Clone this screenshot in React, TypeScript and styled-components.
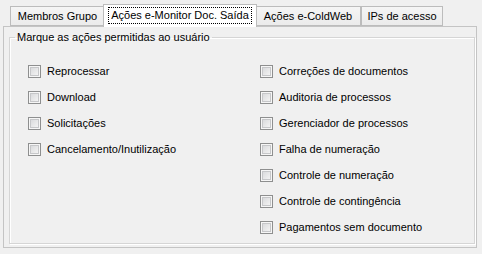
import React from "react";
import styled, { createGlobalStyle } from "styled-components";

const Global = createGlobalStyle`
  html, body { margin: 0; padding: 0; background: #f0f0f0; }
  body { font-family: "Liberation Sans", Arial, sans-serif; font-size: 11px; color: #000; }
`;

const Window = styled.div`
  width: 482px;
  height: 254px;
  padding: 3px 0 0 3px;
  box-sizing: border-box;
  display: flex;
  flex-direction: column;
`;

const TabStrip = styled.div`
  display: flex;
  align-items: flex-end;
  height: 23px;
  padding-left: 7px;
  position: relative;
  z-index: 1;
`;

const Tab = styled.div<{ $w: number; $active?: boolean }>`
  box-sizing: border-box;
  width: ${(p) => p.$w}px;
  height: ${(p) => (p.$active ? 23 : 20)}px;
  margin: ${(p) => (p.$active ? "0 -2px -1px -2px" : "0")};
  position: relative;
  z-index: ${(p) => (p.$active ? 2 : 1)};
  border: 1px solid #bcbcbc;
  border-bottom: ${(p) => (p.$active ? "none" : "1px solid #bcbcbc")};
  background: ${(p) => (p.$active ? "#ffffff" : "linear-gradient(#f5f5f5, #ebebeb)")};
  display: flex;
  align-items: center;
  justify-content: center;
  padding-bottom: ${(p) => (p.$active ? "1px" : "0")};
  white-space: nowrap;
`;

const FocusLabel = styled.span`
  outline: 1px dotted #000;
  outline-offset: 0;
  padding: 1px 2px 1px 2px;
  line-height: 13px;
`;

const Panel = styled.div`
  box-sizing: border-box;
  width: 474px;
  height: 222px;
  border: 1px solid #c4c4c4;
  background: #f0f0f0;
  padding: 4px 1px 2px 5px;
  display: flex;
`;

const Group = styled.fieldset`
  box-sizing: border-box;
  margin: 0;
  flex: 1;
  height: 213px;
  border: 1px solid #d5d5d5;
  box-shadow: 1px 1px 0 #ffffff, inset 1px 1px 0 #ffffff;
  padding: 0;
  min-width: 0;
`;

const Legend = styled.legend`
  margin-left: 5px;
  padding: 0 2px 0 2px;
  line-height: 13px;
`;

const Columns = styled.div`
  display: grid;
  grid-template-columns: 232px 1fr;
  padding: 14px 0 0 18px;
`;

const Column = styled.div`
  display: flex;
  flex-direction: column;
`;

const Row = styled.label`
  display: flex;
  align-items: center;
  height: 26px;
  gap: 6px;
  white-space: nowrap;
`;

const Box = styled.span`
  box-sizing: border-box;
  width: 13px;
  height: 13px;
  border: 1px solid #8e8f8f;
  background: #f6f6f6;
  padding: 1px;
  display: flex;
`;

const BoxInner = styled.span`
  flex: 1;
  border: 1px solid #c6c7c9;
  background: linear-gradient(135deg, #dadbdd, #f3f3f3);
`;

function Check({ label }: { label: string }) {
  return (
    <Row>
      <Box>
        <BoxInner />
      </Box>
      <span>{label}</span>
    </Row>
  );
}

const left = ["Reprocessar", "Download", "Solicitações", "Cancelamento/Inutilização"];
const right = [
  "Correções de documentos",
  "Auditoria de processos",
  "Gerenciador de processos",
  "Falha de numeração",
  "Controle de numeração",
  "Controle de contingência",
  "Pagamentos sem documento",
];

export default function App() {
  return (
    <>
      <Global />
      <Window>
        <TabStrip>
          <Tab $w={95}>Membros Grupo</Tab>
          <Tab $w={154} $active>
            <FocusLabel>Ações e-Monitor Doc. Saída</FocusLabel>
          </Tab>
          <Tab $w={106}>Ações e-ColdWeb</Tab>
          <Tab $w={82}>IPs de acesso</Tab>
        </TabStrip>
        <Panel>
          <Group>
            <Legend>Marque as ações permitidas ao usuário</Legend>
            <Columns>
              <Column>
                {left.map((l) => (
                  <Check key={l} label={l} />
                ))}
              </Column>
              <Column>
                {right.map((l) => (
                  <Check key={l} label={l} />
                ))}
              </Column>
            </Columns>
          </Group>
        </Panel>
      </Window>
    </>
  );
}
